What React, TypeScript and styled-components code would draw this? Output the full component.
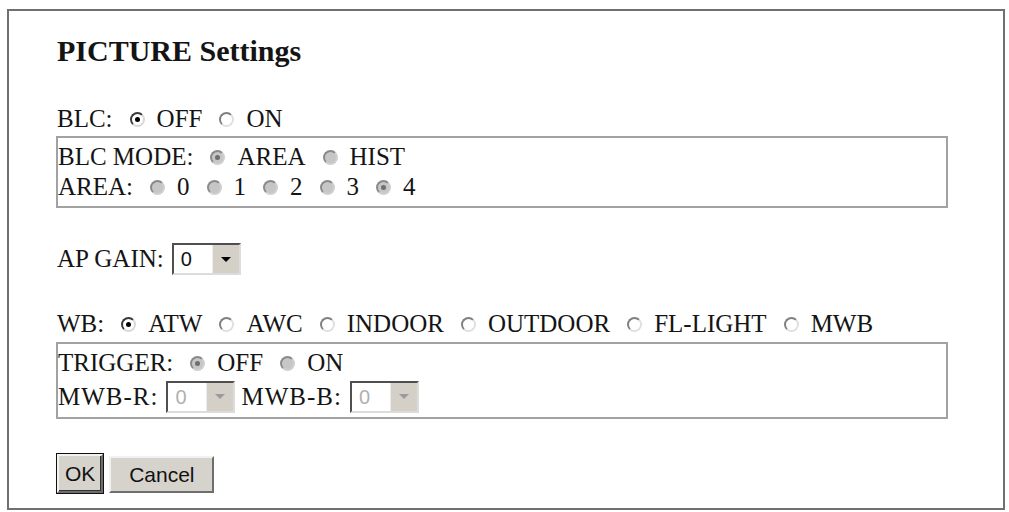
import styled, { createGlobalStyle } from "styled-components";

const GlobalStyle = createGlobalStyle`
  html, body {
    margin: 0;
    padding: 0;
    background: #fff;
  }
  body {
    font-family: "Liberation Serif", "Times New Roman", serif;
    color: #141414;
  }
`;

const Frame = styled.div`
  margin: 9px 4px 2px 7px;
  height: 501px;
  box-sizing: border-box;
  border: 2px solid #707070;
  padding: 23px 0 0 48px;
`;

const Title = styled.h1`
  margin: 0;
  font-size: 30px;
  line-height: 34px;
  font-weight: bold;
`;

const Line = styled.div<{ $top?: number; $h?: number; $spacing?: number }>`
  display: flex;
  align-items: center;
  height: ${(p) => p.$h ?? 30}px;
  margin-top: ${(p) => p.$top ?? 0}px;
  font-size: 25px;
  letter-spacing: ${(p) => p.$spacing ?? 0}px;
  white-space: nowrap;
`;

const Group = styled.div<{ $top?: number; $bottom?: number }>`
  width: 892px;
  margin: ${(p) => p.$top ?? 2}px 0 0 -1px;
  box-sizing: border-box;
  border: 2px solid #a2a2a2;
  padding: 4px 0 ${(p) => p.$bottom ?? 4}px 0;
  display: flex;
  flex-direction: column;
`;

const Opt = styled.span`
  display: inline-flex;
  align-items: center;
`;

const Radio = styled.span<{ $checked?: boolean; $disabled?: boolean }>`
  display: inline-flex;
  align-items: center;
  justify-content: center;
  width: 15px;
  height: 15px;
  box-sizing: border-box;
  margin: 0 12px 0 17px;
  border-radius: 50%;
  border: 2px solid;
  border-color: ${(p) =>
    p.$disabled
      ? "#8a8a8a #cfcfcf #cfcfcf #8a8a8a"
      : p.$checked
      ? "#3a3a3a #d8d8d8 #d8d8d8 #3a3a3a"
      : "#808080 #e0e0e0 #e0e0e0 #808080"};
  background: ${(p) => (p.$disabled ? "#c6c6c6" : "#fff")};

  &::after {
    content: "";
    display: ${(p) => (p.$checked ? "block" : "none")};
    width: 5px;
    height: 5px;
    border-radius: 50%;
    background: ${(p) => (p.$disabled ? "#6e6e6e" : "#000")};
  }
`;

const Label = styled.span<{ $gap?: number }>`
  margin-left: ${(p) => p.$gap ?? 0}px;
`;

const SelectBox = styled.span<{ $disabled?: boolean }>`
  display: inline-flex;
  width: 69px;
  height: 32px;
  box-sizing: border-box;
  margin-left: 8px;
  border: 2px solid;
  border-color: #4f4f4f #dcdcdc #dcdcdc #4f4f4f;
  background: #fff;
  font-family: "Liberation Sans", Arial, sans-serif;
  font-size: 20px;
  letter-spacing: 0;
  color: ${(p) => (p.$disabled ? "#b0b0b0" : "#111")};
`;

const SelectValue = styled.span`
  flex: 1;
  padding-left: 7px;
  line-height: 28px;
`;

const SelectArrow = styled.span<{ $disabled?: boolean }>`
  width: 26px;
  display: flex;
  align-items: center;
  justify-content: center;
  background: #d4d0c8;
  border-left: 1px solid #ececec;

  &::after {
    content: "";
    border-left: 5px solid transparent;
    border-right: 5px solid transparent;
    border-top: 5px solid ${(p) => (p.$disabled ? "#9a9a9a" : "#000")};
  }
`;

const Buttons = styled.div`
  display: flex;
  align-items: flex-start;
  gap: 6px;
  margin-top: 35px;
`;

const Button = styled.button<{ $default?: boolean }>`
  height: ${(p) => (p.$default ? 39 : 37)}px;
  margin-top: ${(p) => (p.$default ? 0 : 2)}px;
  padding: 0 ${(p) => (p.$default ? 6 : 14)}px;
  min-width: ${(p) => (p.$default ? 45 : 105)}px;
  font-family: "Liberation Sans", Arial, sans-serif;
  font-size: 21px;
  color: #111;
  background: #d6d3cd;
  border: 2px solid;
  border-color: #f2f2f2 #6e6e6e #6e6e6e #f2f2f2;
  outline: ${(p) => (p.$default ? "1px solid #111" : "none")};
  box-shadow: ${(p) => (p.$default ? "inset -1px -1px 0 #333" : "none")};
  cursor: pointer;
`;

function Dropdown({ value, disabled }: { value: string; disabled?: boolean }) {
  return (
    <SelectBox $disabled={disabled}>
      <SelectValue>{value}</SelectValue>
      <SelectArrow $disabled={disabled} />
    </SelectBox>
  );
}

function Option({
  label,
  checked,
  disabled,
}: {
  label: string;
  checked?: boolean;
  disabled?: boolean;
}) {
  return (
    <Opt>
      <Radio $checked={checked} $disabled={disabled} />
      {label}
    </Opt>
  );
}

export default function App() {
  return (
    <>
      <GlobalStyle />
      <Frame>
        <Title>PICTURE Settings</Title>

        <Line $top={36}>
          BLC:
          <Option label="OFF" checked />
          <Option label="ON" />
        </Line>
        <Group>
          <Line>
            BLC MODE:
            <Option label="AREA" checked disabled />
            <Option label="HIST" disabled />
          </Line>
          <Line>
            AREA:
            <Option label="0" disabled />
            <Option label="1" disabled />
            <Option label="2" disabled />
            <Option label="3" disabled />
            <Option label="4" checked disabled />
          </Line>
        </Group>

        <Line $top={35} $h={32}>
          AP GAIN:
          <Dropdown value="0" />
        </Line>

        <Line $top={34}>
          WB:
          <Option label="ATW" checked />
          <Option label="AWC" />
          <Option label="INDOOR" />
          <Option label="OUTDOOR" />
          <Option label="FL-LIGHT" />
          <Option label="MWB" />
        </Line>
        <Group $top={3} $bottom={2}>
          <Line>
            TRIGGER:
            <Option label="OFF" checked disabled />
            <Option label="ON" disabled />
          </Line>
          <Line $h={37} $spacing={1}>
            MWB-R:
            <Dropdown value="0" disabled />
            <Label $gap={6}>MWB-B:</Label>
            <Dropdown value="0" disabled />
          </Line>
        </Group>

        <Buttons>
          <Button $default>OK</Button>
          <Button>Cancel</Button>
        </Buttons>
      </Frame>
    </>
  );
}
